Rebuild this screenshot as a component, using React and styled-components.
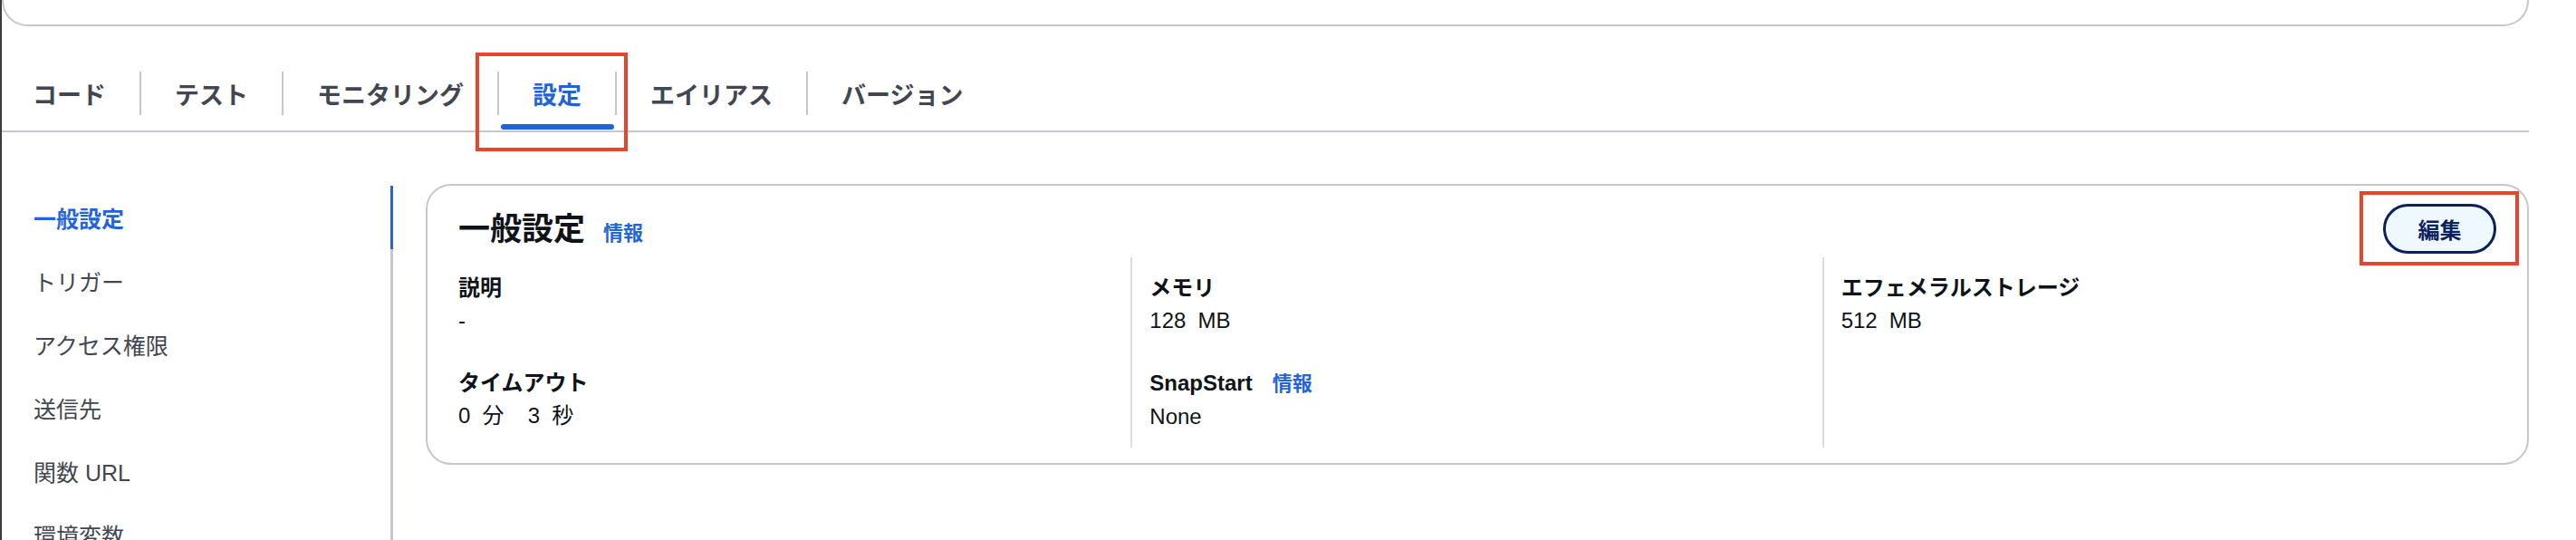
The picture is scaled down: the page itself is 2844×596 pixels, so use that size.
import React from "react";
import styled, { createGlobalStyle } from "styled-components";

const FONT = `"Liberation Sans", "Noto Sans CJK JP", sans-serif`;
const BLUE = "#1f64d8";
const BORDER = "#c6c6cd";
const TEXT = "#0f141a";
const MUTED = "#424650";
const RED = "#e8432b";
const NAVY = "#0a215e";

const GlobalStyle = createGlobalStyle`
  html, body { margin: 0; padding: 0; background: #ffffff; }
  body {
    font-family: ${FONT};
    color: ${TEXT};
    overflow: hidden;
  }
  *, *::before, *::after { box-sizing: border-box; }
`;

const Page = styled.div`
  width: 2844px;
  min-height: 596px;
  border-left: 2px solid #3b3b3b;
`;

const TopCard = styled.div`
  height: 29px;
  margin-right: 52px;
  border: 2px solid ${BORDER};
  border-top: none;
  border-radius: 0 0 28px 28px;
`;

const TabBar = styled.div`
  display: flex;
  align-items: stretch;
  margin: 33px 52px 0 0;
  border-bottom: 2px solid ${BORDER};
`;

const Tab = styled.div`
  position: relative;
  display: flex;
  align-items: center;
  height: 82px;
  padding: 0 37px 0 ${(p) => (p.$first ? 34 : 37)}px;
  font-size: 27px;
  font-weight: 700;
  white-space: nowrap;
  color: ${(p) => (p.$active ? BLUE : MUTED)};
`;

const TabDivider = styled.span`
  flex: none;
  align-self: center;
  width: 2px;
  height: 48px;
  background: ${BORDER};
`;

const TabUnderline = styled.span`
  position: absolute;
  left: 2px;
  right: 1px;
  bottom: 1px;
  height: 6px;
  border-radius: 3px;
  background: ${BLUE};
`;

const Highlight = styled.span`
  position: absolute;
  top: ${(p) => p.$t}px;
  right: ${(p) => p.$r}px;
  bottom: ${(p) => p.$b}px;
  left: ${(p) => p.$l}px;
  border: 4px solid ${RED};
  pointer-events: none;
`;

const Main = styled.div`
  display: flex;
  align-items: flex-start;
  gap: 36px;
  margin: 57px 52px 0 0;
`;

const SideNav = styled.nav`
  flex: none;
  width: 432px;
  padding-top: 2px;
  display: flex;
  flex-direction: column;
`;

const SideItem = styled.div`
  height: 70px;
  display: flex;
  align-items: center;
  padding-left: 35px;
  border-right: 3px solid ${(p) => (p.$active ? BLUE : BORDER)};
  font-size: 25px;
  font-weight: ${(p) => (p.$active ? 700 : 400)};
  color: ${(p) => (p.$active ? BLUE : MUTED)};
  white-space: nowrap;
`;

const Card = styled.section`
  flex: 1;
  min-width: 0;
  border: 2px solid ${BORDER};
  border-radius: 28px;
  padding: 0 34px 17px;
`;

const CardHeader = styled.div`
  display: flex;
  align-items: center;
  justify-content: space-between;
  padding: 20px 0 4px;
`;

const TitleGroup = styled.div`
  display: flex;
  align-items: baseline;
  gap: 20px;
`;

const Title = styled.h2`
  margin: 0;
  font-size: 35px;
  font-weight: 700;
  line-height: 1.2;
  color: ${TEXT};
`;

const InfoLink = styled.a`
  font-size: 22px;
  font-weight: 700;
  color: ${BLUE};
  text-decoration: none;
`;

const ButtonWrap = styled.div`
  position: relative;
  display: flex;
`;

const Button = styled.button`
  width: 125px;
  height: 55px;
  padding: 0;
  border: 3px solid ${NAVY};
  border-radius: 28px;
  background: #f0f8ff;
  color: ${NAVY};
  font-family: ${FONT};
  font-size: 24px;
  font-weight: 700;
`;

const Columns = styled.div`
  display: grid;
  grid-template-columns: repeat(3, 1fr);
  margin: 0 -19px 0 -21px;
`;

const Column = styled.div`
  padding: 16px 19px;
  border-left: 2px solid ${(p) => (p.$first ? "transparent" : "#dcdce1")};
`;

const Field = styled.div`
  & + & {
    margin-top: 33px;
  }
`;

const Label = styled.div`
  display: flex;
  align-items: baseline;
  gap: 22px;
  font-size: 24px;
  font-weight: 700;
  line-height: 36px;
  color: ${TEXT};
`;

const Value = styled.div`
  font-size: 24px;
  line-height: 36px;
  white-space: pre;
  word-spacing: 6.5px;
  color: ${TEXT};
`;

const tabs = ["コード", "テスト", "モニタリング", "設定", "エイリアス", "バージョン"];
const ACTIVE_TAB = "設定";

const navItems = [
  "一般設定",
  "トリガー",
  "アクセス権限",
  "送信先",
  "関数 URL",
  "環境変数",
  "タグ",
];

const columns = [
  [
    { label: "説明", value: "-" },
    { label: "タイムアウト", value: "0 分  3 秒" },
  ],
  [
    { label: "メモリ", value: "128 MB" },
    { label: "SnapStart", info: true, value: "None" },
  ],
  [{ label: "エフェメラルストレージ", value: "512 MB" }],
];

export default function App() {
  return (
    <>
      <GlobalStyle />
      <Page>
        <TopCard />
        <TabBar>
          {tabs.map((t, i) => (
            <React.Fragment key={t}>
              {i > 0 && <TabDivider />}
              <Tab $first={i === 0} $active={t === ACTIVE_TAB}>
                {t}
                {t === ACTIVE_TAB && (
                  <>
                    <TabUnderline />
                    <Highlight $t={-4} $r={-14} $b={-23} $l={-26} />
                  </>
                )}
              </Tab>
            </React.Fragment>
          ))}
        </TabBar>
        <Main>
          <SideNav>
            {navItems.map((n, i) => (
              <SideItem key={n} $active={i === 0}>
                {n}
              </SideItem>
            ))}
          </SideNav>
          <Card>
            <CardHeader>
              <TitleGroup>
                <Title>一般設定</Title>
                <InfoLink href="#">情報</InfoLink>
              </TitleGroup>
              <ButtonWrap>
                <Button type="button">編集</Button>
                <Highlight $t={-14} $r={-25} $b={-13} $l={-26} />
              </ButtonWrap>
            </CardHeader>
            <Columns>
              {columns.map((col, ci) => (
                <Column key={ci} $first={ci === 0}>
                  {col.map((f) => (
                    <Field key={f.label}>
                      <Label>
                        {f.label}
                        {f.info && <InfoLink href="#">情報</InfoLink>}
                      </Label>
                      <Value>{f.value}</Value>
                    </Field>
                  ))}
                </Column>
              ))}
            </Columns>
          </Card>
        </Main>
      </Page>
    </>
  );
}
